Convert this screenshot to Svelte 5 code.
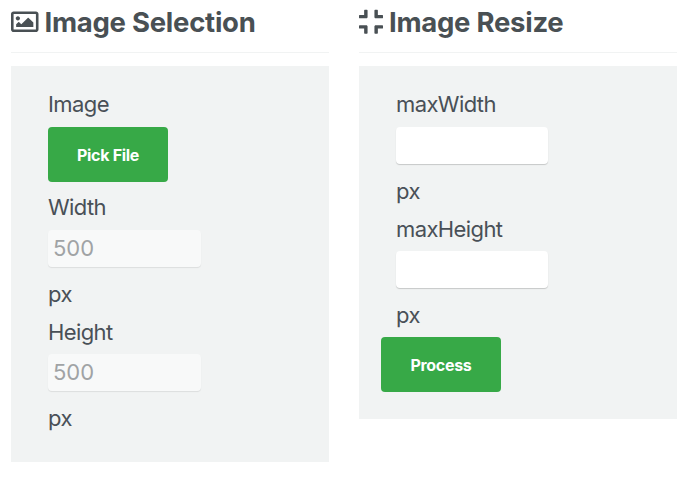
<script>
  let width = $state('');
  let height = $state('');
  let maxWidth = $state('');
  let maxHeight = $state('');
</script>

<main>
  <section>
    <h2>
      <svg class="picture" viewBox="0 0 512 512" aria-hidden="true"><path d="M464 64H48C21.49 64 0 85.49 0 112v288c0 26.51 21.49 48 48 48h416c26.51 0 48-21.49 48-48V112c0-26.51-21.49-48-48-48zm-6 336H54a6 6 0 0 1-6-6V118a6 6 0 0 1 6-6h404a6 6 0 0 1 6 6v276a6 6 0 0 1-6 6zM128 152c-22.091 0-40 17.909-40 40s17.909 40 40 40 40-17.909 40-40-17.909-40-40-40zM96 352h320v-80l-87.515-87.515c-4.686-4.686-12.284-4.686-16.971 0L192 304l-39.515-39.515c-4.686-4.686-12.284-4.686-16.971 0L96 304v48z" /></svg>
      <span>Image Selection</span>
    </h2>
    <div class="panel selection">
      <div class="label">Image</div>
      <button type="button">Pick File</button>
      <label class="label after-button" for="width">Width</label>
      <input id="width" placeholder="500" disabled bind:value={width} />
      <div class="unit">px</div>
      <label class="label second" for="height">Height</label>
      <input id="height" placeholder="500" disabled bind:value={height} />
      <div class="unit">px</div>
    </div>
  </section>

  <section>
    <h2>
      <svg class="compress" viewBox="0 0 448 512" aria-hidden="true"><path d="M436 192H312c-13.3 0-24-10.7-24-24V44c0-6.6 5.4-12 12-12h40c6.6 0 12 5.4 12 12v84h84c6.6 0 12 5.4 12 12v40c0 6.6-5.4 12-12 12zm-276-24V44c0-6.6-5.4-12-12-12h-40c-6.6 0-12 5.4-12 12v84H12c-6.6 0-12 5.4-12 12v40c0 6.6 5.4 12 12 12h124c13.3 0 24-10.7 24-24zm0 300V344c0-13.3-10.7-24-24-24H12c-6.6 0-12 5.4-12 12v40c0 6.6 5.4 12 12 12h84v84c0 6.6 5.4 12 12 12h40c6.6 0 12-5.4 12-12zm192 0v-84h84c6.6 0 12-5.4 12-12v-40c0-6.6-5.4-12-12-12H312c-13.3 0-24 10.7-24 24v124c0 6.6 5.4 12 12 12h40c6.6 0 12-5.4 12-12z" /></svg>
      <span>Image Resize</span>
    </h2>
    <div class="panel resize">
      <label class="label" for="max-width">maxWidth</label>
      <input id="max-width" bind:value={maxWidth} />
      <div class="unit">px</div>
      <label class="label second" for="max-height">maxHeight</label>
      <input id="max-height" bind:value={maxHeight} />
      <div class="unit">px</div>
      <button type="button" class="process">Process</button>
    </div>
  </section>
</main>

<style>
  :global(body) {
    background: #fff;
  }
  main {
    display: flex;
    align-items: flex-start;
    gap: 30px;
    padding-left: 11px;
    color: #495057;
    font-family: Inter, 'Liberation Sans', sans-serif;
    font-size: 22px;
  }
  section {
    width: 318px;
    flex: none;
  }
  h2 {
    display: flex;
    align-items: center;
    gap: 6px;
    box-sizing: border-box;
    height: 53px;
    margin: 0 0 13px;
    padding-bottom: 8px;
    border-bottom: 1px solid #f1f3f3;
    color: #495054;
    font-size: 27.5px;
    font-weight: 700;
    letter-spacing: -0.26px;
    line-height: 44px;
    white-space: nowrap;
  }
  svg {
    flex: none;
    height: 27.5px;
    fill: currentColor;
  }
  .picture {
    width: 27.5px;
  }
  .compress {
    width: 24px;
  }
  .panel {
    display: flex;
    flex-direction: column;
    align-items: flex-start;
    box-sizing: border-box;
    padding: 22px 37px 0;
    background: #f1f3f3;
    letter-spacing: -0.6px;
  }
  .selection {
    height: 396px;
  }
  .resize {
    height: 353px;
  }
  .label {
    height: 39px;
    line-height: 33px;
  }
  .second {
    height: 38px;
  }
  .after-button {
    margin-top: 9px;
  }
  button {
    width: 120px;
    height: 55px;
    margin: 0;
    padding: 0;
    border: 0;
    border-radius: 4px;
    background: #37a947;
    color: #fff;
    font: 700 16px Inter, 'Liberation Sans', sans-serif;
    letter-spacing: -0.3px;
  }
  .process {
    margin: 0 0 0 -15px;
  }
  input {
    box-sizing: border-box;
    width: 152px;
    height: 37px;
    margin: 0;
    padding: 0 5px 1px;
    border: 0;
    border-radius: 4px;
    outline: 0;
    background: #fff;
    box-shadow: 0 1px 1px rgb(0 0 0 / 18%);
    color: #495057;
    font: 22px Inter, 'Liberation Sans', sans-serif;
    letter-spacing: normal;
  }
  input:disabled {
    width: 153px;
    background: #f8f9f9;
    box-shadow: 0 1px 1px rgb(0 0 0 / 9%);
  }
  input::placeholder {
    color: #a0a3a5;
    opacity: 1;
  }
  .unit {
    height: 33px;
    margin: 11px 0 5px;
    line-height: 33px;
  }
</style>
